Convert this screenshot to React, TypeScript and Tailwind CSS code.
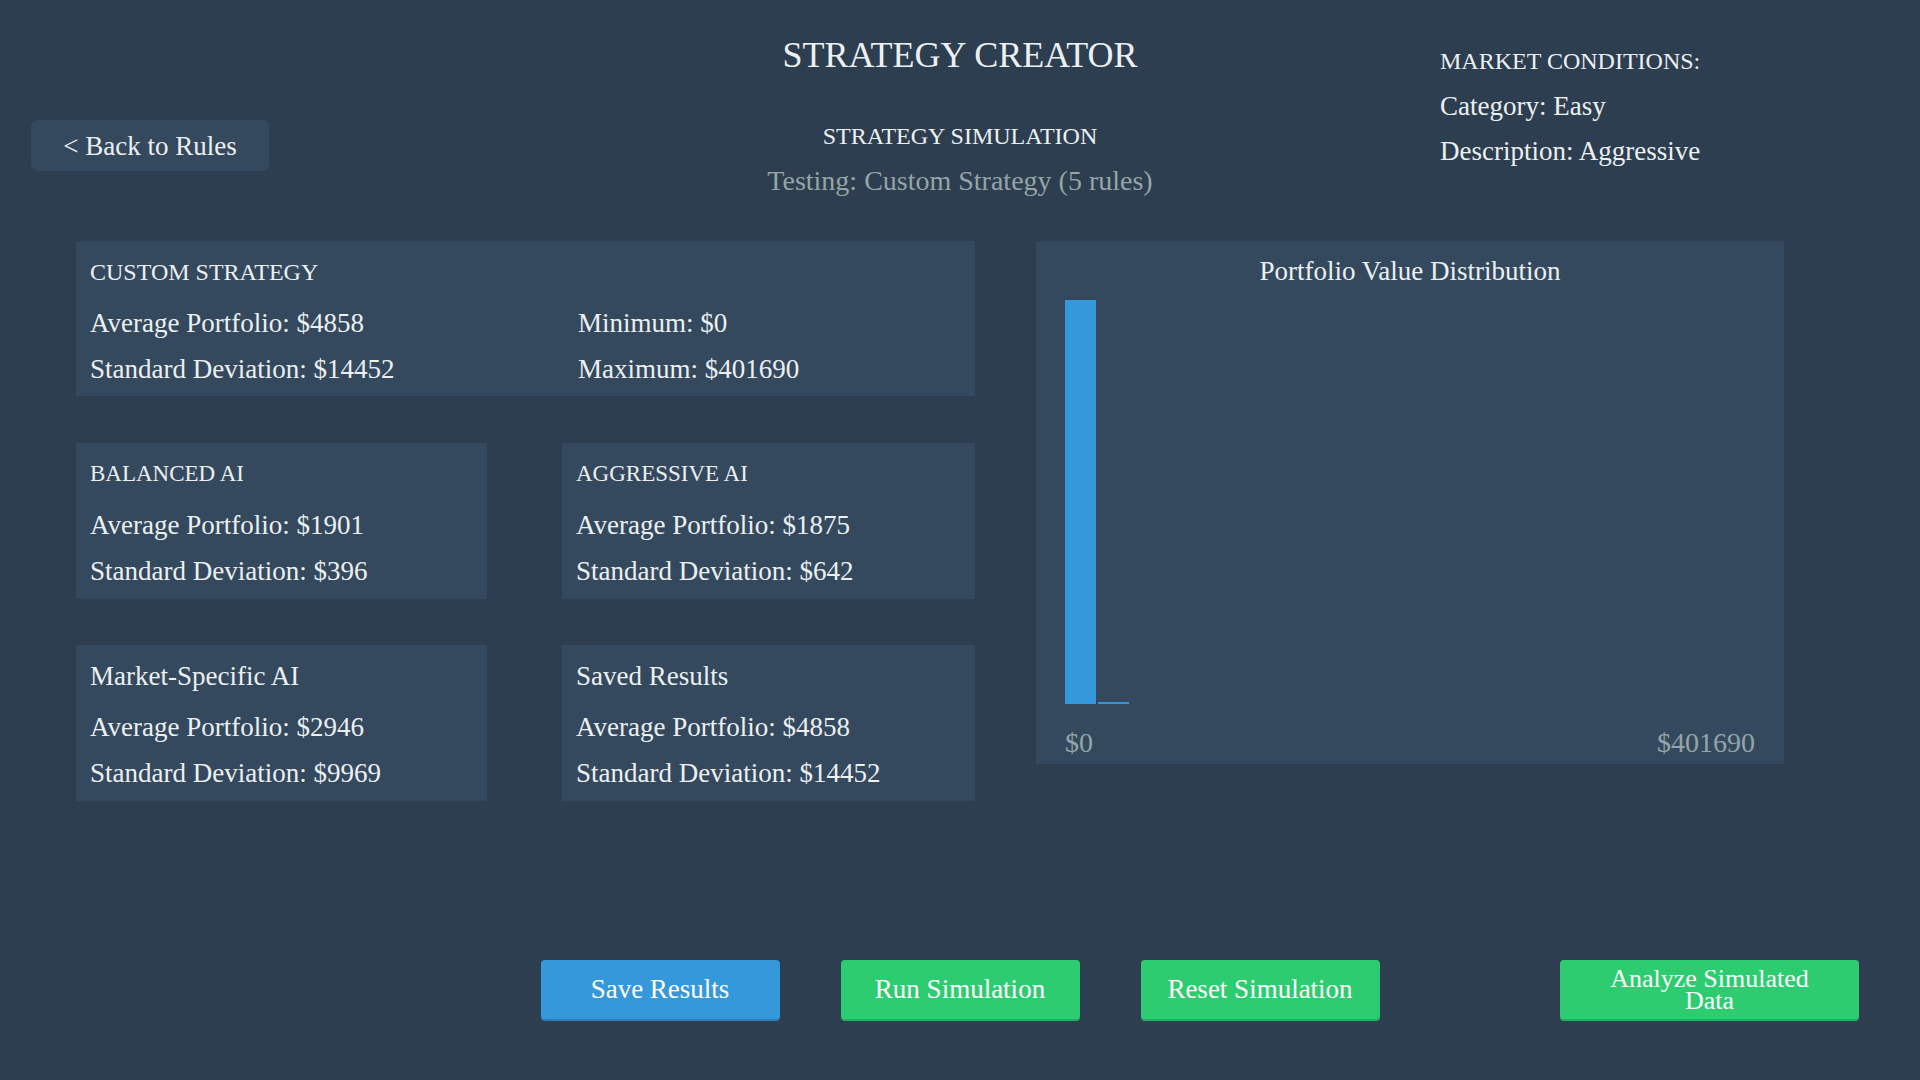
import React from "react";

type Stat = { label: string; value: string };

const serif = "font-['Liberation_Serif',serif]";

function StatCard({ title, stats }: { title: string; stats: Stat[] }) {
    const upper = title === title.toUpperCase();
    return (
        <div className="bg-[#34495e] h-[156px] px-[14px] pt-[16px]">
            <p className={upper ? "text-[23px] leading-[30px]" : "text-[27px] leading-[30px]"}>{title}</p>
            <div className="mt-[21px] flex flex-col gap-[16px]">
                {stats.map((s) => (
                    <p key={s.label} className="text-[27px] leading-[30px]">
                        {s.label}: {s.value}
                    </p>
                ))}
            </div>
        </div>
    );
}

export default function App() {
    // histogram of simulated portfolio values, first bucket holds nearly everything
    const buckets = [100, 0.5];

    return (
        <div className={`${serif} w-full h-screen bg-[#2c3e50] text-[#ecf0f1] flex flex-col`}>
            {/* header */}
            <div className="grid grid-cols-[1fr_400px_1fr] h-[241px]">
                <div className="pl-[31px] pt-[120px]">
                    <button className="bg-[#34495e] rounded-[6px] w-[238px] h-[51px] text-[27px] leading-[30px] text-[#ecf0f1]">
                        &lt; Back to Rules
                    </button>
                </div>
                <div className="flex flex-col items-center">
                    <h1 className="mt-[35px] text-[36px] leading-[40px] whitespace-nowrap">STRATEGY CREATOR</h1>
                    <h2 className="mt-[46px] text-[24px] leading-[30px] whitespace-nowrap">STRATEGY SIMULATION</h2>
                    <p className="mt-[15px] text-[28px] leading-[30px] text-[#95a5a6] whitespace-nowrap">
                        Testing: Custom Strategy (5 rules)
                    </p>
                </div>
                <div className="pl-[280px] pt-[46px] flex flex-col gap-[15px]">
                    <p className="text-[24px] leading-[30px]">MARKET CONDITIONS:</p>
                    <p className="text-[27px] leading-[30px]">Category: Easy</p>
                    <p className="text-[27px] leading-[30px]">Description: Aggressive</p>
                </div>
            </div>

            {/* results + chart */}
            <div className="flex pl-[76px] gap-[61px]">
                <div className="w-[899px] flex flex-col gap-[47px]">
                    <div className="bg-[#34495e] h-[155px] px-[14px] pt-[16px]">
                        <p className="text-[24px] leading-[30px]">CUSTOM STRATEGY</p>
                        <div className="mt-[21px] grid grid-cols-[488px_1fr] gap-y-[16px] text-[27px] leading-[30px]">
                            <p>Average Portfolio: $4858</p>
                            <p>Minimum: $0</p>
                            <p>Standard Deviation: $14452</p>
                            <p>Maximum: $401690</p>
                        </div>
                    </div>
                    <div className="grid grid-cols-[411px_413px] gap-x-[75px] gap-y-[46px]">
                        <StatCard
                            title="BALANCED AI"
                            stats={[
                                { label: "Average Portfolio", value: "$1901" },
                                { label: "Standard Deviation", value: "$396" },
                            ]}
                        />
                        <StatCard
                            title="AGGRESSIVE AI"
                            stats={[
                                { label: "Average Portfolio", value: "$1875" },
                                { label: "Standard Deviation", value: "$642" },
                            ]}
                        />
                        <StatCard
                            title="Market-Specific AI"
                            stats={[
                                { label: "Average Portfolio", value: "$2946" },
                                { label: "Standard Deviation", value: "$9969" },
                            ]}
                        />
                        <StatCard
                            title="Saved Results"
                            stats={[
                                { label: "Average Portfolio", value: "$4858" },
                                { label: "Standard Deviation", value: "$14452" },
                            ]}
                        />
                    </div>
                </div>

                <div className="w-[748px] h-[523px] bg-[#34495e] flex flex-col px-[29px] pt-[15px]">
                    <p className="text-center text-[27px] leading-[30px]">Portfolio Value Distribution</p>
                    <div className="mt-[14px] h-[404px] flex items-end gap-[2px]">
                        {buckets.map((b, i) => (
                            <div
                                key={i}
                                className="w-[31px] bg-[#3498db]"
                                style={{ height: `${Math.max(b, 0.5)}%` }}
                            />
                        ))}
                    </div>
                    <div className="mt-[24px] flex justify-between text-[28px] leading-[30px] text-[#95a5a6]">
                        <span>$0</span>
                        <span>$401690</span>
                    </div>
                </div>
            </div>

            {/* actions */}
            <div className="mt-auto mb-[61px] grid grid-cols-[1fr_auto_1fr] items-center">
                <div />
                <div className="flex gap-[61px]">
                    <button className="w-[239px] h-[59px] rounded-[4px] bg-[#3498db] shadow-[0_2px_0_#2a7fb8] text-[27px] text-white">
                        Save Results
                    </button>
                    <button className="w-[239px] h-[59px] rounded-[4px] bg-[#2ecc71] shadow-[0_2px_0_#27ae60] text-[27px] text-white">
                        Run Simulation
                    </button>
                    <button className="w-[239px] h-[59px] rounded-[4px] bg-[#2ecc71] shadow-[0_2px_0_#27ae60] text-[27px] text-white">
                        Reset Simulation
                    </button>
                </div>
                <div className="flex justify-end pr-[61px]">
                    <button className="w-[299px] h-[59px] rounded-[4px] bg-[#2ecc71] shadow-[0_2px_0_#27ae60] text-[26px] leading-[22px] text-white px-[40px]">
                        Analyze Simulated Data
                    </button>
                </div>
            </div>
        </div>
    );
}
